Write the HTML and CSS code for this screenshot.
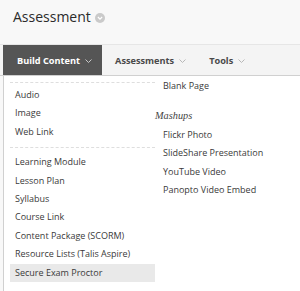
FILE: index.html
```html
<!DOCTYPE html>
<html>
<head>
<meta charset="utf-8">
<link rel="stylesheet" href="styles.css">
</head>
<body>
<div class="header">
  <h1 class="title">Assessment</h1>
  <span class="title-icon"><svg width="10" height="10" viewBox="0 0 10 10"><circle cx="5" cy="5" r="5" fill="#cacaca"/><path d="M2.9 4 L5 6.1 L7.1 4" stroke="#fff" stroke-width="1.2" fill="none"/></svg></span>
</div>
<div class="tabs">
  <div class="tab active">Build Content <svg class="chev" width="7" height="4" viewBox="0 0 7 4"><path d="M0.5 0.5 L3.5 3.5 L6.5 0.5" stroke="#c8c8c8" stroke-width="1" fill="none"/></svg></div>
  <div class="tab">Assessments <svg class="chev" width="7" height="4" viewBox="0 0 7 4"><path d="M0.5 0.5 L3.5 3.5 L6.5 0.5" stroke="#b8b8b8" stroke-width="1" fill="none"/></svg></div>
  <div class="tab">Tools <svg class="chev" width="7" height="4" viewBox="0 0 7 4"><path d="M0.5 0.5 L3.5 3.5 L6.5 0.5" stroke="#b8b8b8" stroke-width="1" fill="none"/></svg></div>
</div>
<div class="menu">
  <ul class="col left">
    <li class="sep first"></li>
    <li>Audio</li>
    <li>Image</li>
    <li>Web Link</li>
    <li class="sep"></li>
    <li>Learning Module</li>
    <li>Lesson Plan</li>
    <li>Syllabus</li>
    <li>Course Link</li>
    <li>Content Package (SCORM)</li>
    <li>Resource Lists (Talis Aspire)</li>
    <li class="hl">Secure Exam Proctor</li>
  </ul>
  <ul class="col right">
    <li>Blank Page</li>
    <li class="group">Mashups</li>
    <li>Flickr Photo</li>
    <li>SlideShare Presentation</li>
    <li>YouTube Video</li>
    <li>Panopto Video Embed</li>
  </ul>
</div>
</body>
</html>
```
FILE: styles.css
```css
html, body {
  margin: 0;
  padding: 0;
}
body {
  background: #f8f8f8;
  font-family: "Open Sans", "Liberation Sans", sans-serif;
  color: #333;
  width: 300px;
  height: 291px;
  overflow: hidden;
}
.header {
  display: flex;
  align-items: flex-start;
  gap: 4px;
  padding: 6px 0 0 13px;
  height: 38px;
  box-sizing: border-box;
}
.title {
  margin: 0;
  font-size: 14px;
  font-weight: 400;
  line-height: 22px;
  color: #2b2b2b;
}
.title-icon {
  display: flex;
  padding-top: 7px;
}
.tabs {
  margin-top: 6px;
  display: flex;
  height: 30px;
  background: #f4f4f4;
  border-top: 1px solid #e6e6e6;
  border-bottom: 1px solid #d0d0d0;
  padding-left: 3px;
}
.tab {
  display: flex;
  align-items: center;
  gap: 5px;
  padding: 0 10px 0 13px;
  font-size: 9.2px;
  font-weight: 700;
  color: #4a4a4a;
}
.tab.active {
  background: #555;
  color: #fff;
  padding: 0 10px 0 14px;
}
.chev {
  margin-top: 1px;
}
.menu {
  display: flex;
  margin-left: 3px;
  background: #fff;
  border-left: 1px solid #d0d0d0;
  height: 220px;
}
.col {
  list-style: none;
  margin: 0;
  padding: 0;
}
.col li {
  font-size: 9px;
  line-height: 18.4px;
  height: 18.4px;
  color: #3a3a3a;
  padding-left: 5px;
}
.left {
  width: 145px;
  padding-left: 6px;
  padding-top: 6px;
}
.left li.sep {
  height: 0;
  border-top: 1px dashed #dedede;
  margin: 6px 0 5px 0;
}
.left li.sep.first {
  margin: 0 0 3px 0;
}
.left li.hl {
  background: #e9e9e9;
}
.right {
  padding-top: 1px;
}
.right li {
  padding-left: 8px;
}
.right li.group {
  font-family: "Liberation Serif", serif;
  font-style: italic;
  font-size: 10.3px;
  padding-left: 0;
  margin-top: 12px;
  color: #444;
}
```
